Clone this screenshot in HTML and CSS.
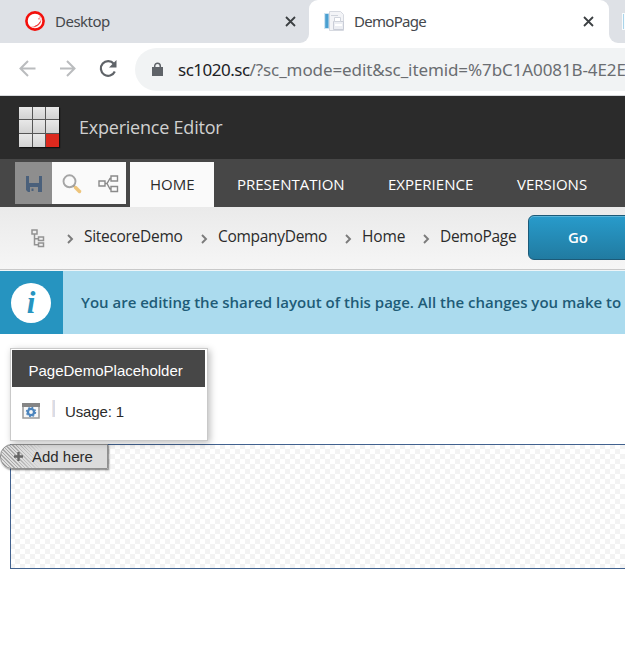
FILE: index.html
```html
<!DOCTYPE html>
<html lang="en">
<head>
<meta charset="utf-8">
<title>DemoPage</title>
<link rel="stylesheet" href="styles.css">
</head>
<body>
<div class="tabs">
  <div class="tab tab-left">
    <svg class="fav" width="20" height="20" viewBox="0 0 20 20"><circle cx="10" cy="10" r="8.6" fill="#fff" stroke="#f3100c" stroke-width="2.6"/><path d="M16 5.500q2 7-5 10.500-3 1-5-.5 4 .5 6.500-2 3.500-3 3.500-8z" fill="#f79a97"/><path d="M15.500 10.500q-1.500 4-6 5M14 7v1.500M15 5.500v1" fill="none" stroke="#e33" stroke-width="1"/></svg>
    <span class="t-desktop">Desktop</span>
    <svg class="close" width="11" height="11" viewBox="0 0 11 11"><path d="M1 1l9 9M10 1l-9 9" stroke="#3c4043" stroke-width="1.8"/></svg>
  </div>
  <div class="tab tab-active">
    <svg class="fav" width="20" height="20" viewBox="0 0 20 20"><path d="M5.500.5h11l3 3v16h-14z" fill="#f3f4f7" stroke="#d6d9e0"/><path d="M0 2h5v16H0z" fill="#cfe5f3"/><path d="M1.200 3h3.300v14H1.200z" fill="#4a9fd0"/><path d="M7 4.500h7" stroke="#d0d4dc"/><path d="M9.500 10.500h10v8h-10z" fill="#eceef3" stroke="#c9cdd7"/><path d="M10.500 6.500h6v4h-6z" fill="#fff" stroke="#d0d4dc"/><path d="M11 14h7" stroke="#fff" stroke-width="2"/></svg>
    <span class="t-demo">DemoPage</span>
    <svg class="close" width="11" height="11" viewBox="0 0 11 11"><path d="M1 1l9 9M10 1l-9 9" stroke="#3c4043" stroke-width="1.8"/></svg>
  </div>
  <div class="tab tab-next"><i></i></div>
</div>
<div class="toolbar">
  <svg class="nav" width="110" height="20" viewBox="0 0 110 20" fill="none" stroke-width="2"><path d="M17.500 9.500H3M10 2L2.500 9.500 10 17M42 9.500h14.500M49 2l7.500 7.500L49 17" stroke="#babcbe"/><path d="M96.800 12.500a7.300 7.300 0 1 1-1-7.700" stroke="#5f6368" stroke-width="2.200"/><path d="M98.500 1v7.500H91z" fill="#5f6368"/></svg>
  <div class="url">
    <svg width="11" height="15" viewBox="0 0 11 15"><path d="M0 5h11v9H0z" fill="#5f6368"/><path d="M2.700 6V4a2.800 2.800 0 0 1 5.600 0v2" fill="none" stroke="#5f6368" stroke-width="1.500"/></svg>
    <span class="addr"><b>sc1020.sc</b>/?sc_mode=edit&amp;sc_itemid=%7bC1A0081B-4E2E</span>
  </div>
</div>
<header class="header">
  <div class="logo"><i></i><i></i><i></i><i></i><i></i><i></i><i></i><i></i><i class="red"></i></div>
  <span class="brand">Experience Editor</span>
</header>
<nav class="ribbon">
  <div class="quick">
    <span class="save"><svg width="16" height="16" viewBox="0 0 16 16"><path d="M0 0h16v16H2l-2-2z" fill="#4a607b"/><path d="M3 0h10v7H3zM4 11h8v5H4z" fill="#8e8e8e"/><path d="M5.500 12.500h2V15h-2z" fill="#4a607b"/></svg></span>
    <svg class="find" width="20" height="20" viewBox="0 0 20 20"><circle cx="7.500" cy="7.300" r="6" fill="#fafafa" stroke="#a5a5a5" stroke-width="1.900"/><path d="M11.500 11.500l2 2" stroke="#999" stroke-width="2"/><path d="M13.500 13.500l4 4" stroke="#edc47b" stroke-width="3.500" stroke-linecap="round"/></svg>
    <svg class="share" width="21" height="18" viewBox="0 0 21 18" fill="none" stroke="#8a8a8a" stroke-width="1.400"><path d="M1 6h6v5H1zM13 1h6.500v5H13zM13 11.500h6.500v5H13zM7 8.500h2l3-5h1M9 8.500l3 5.500h1"/></svg>
  </div>
  <span class="rtab home"><span>HOME</span></span>
  <span class="rtab pres">PRESENTATION</span>
  <span class="rtab exp">EXPERIENCE</span>
  <span class="rtab ver">VERSIONS</span>
</nav>
<div class="crumbs">
  <svg class="tree" width="14" height="19" viewBox="0 0 14 19" fill="none" stroke="#929292" stroke-width="1.500"><path d="M1 1h5v4H1zM7.500 8h5v3.500h-5zM7.500 14h5v3.500h-5zM3.500 5v10.800h4M3.500 9.700h4"/></svg>
  <svg class="chev" width="7" height="10" viewBox="0 0 7 10"><path d="M1 1l4 4-4 4"/></svg><span class="c1">SitecoreDemo</span>
  <svg class="chev" width="7" height="10" viewBox="0 0 7 10"><path d="M1 1l4 4-4 4"/></svg><span class="c2">CompanyDemo</span>
  <svg class="chev" width="7" height="10" viewBox="0 0 7 10"><path d="M1 1l4 4-4 4"/></svg><span class="c3">Home</span>
  <svg class="chev" width="7" height="10" viewBox="0 0 7 10"><path d="M1 1l4 4-4 4"/></svg><span class="c4">DemoPage</span>
  <button class="go">Go</button>
</div>
<div class="notice">
  <div class="info"><span>i</span></div>
  <p>You are editing the shared layout of this page. All the changes you make to</p>
</div>
<main class="canvas">
  <section class="popup">
    <h2><span>PageDemoPlaceholder</span></h2>
    <div class="usage">
      <svg width="18" height="16" viewBox="0 0 18 16"><path d="M1 1h16v14H1z" fill="#f8f8f8" stroke="#9b9b9b" stroke-width="1.500"/><path d="M0 0h18v4H0z" fill="#858585"/><circle cx="9" cy="9" r="3.100" fill="none" stroke="#4b84bd" stroke-width="2.400"/><circle cx="9" cy="9" r="4.600" fill="none" stroke="#4b84bd" stroke-width="1.200" stroke-dasharray="1.800 1.810"/></svg>
      <i></i><span>Usage: 1</span>
    </div>
  </section>
  <section class="placeholder">
    <div class="add"><svg width="11" height="11" viewBox="0 0 11 11"><path d="M5.500 1v9M1 5.500h9" stroke="#666" stroke-width="2.400"/></svg><span>Add here</span></div>
  </section>
</main>
</body>
</html>
```
FILE: styles.css
```css
* { box-sizing: border-box; }
body { margin: 0; width: 625px; height: 653px; overflow: hidden; background: #fff; font-family: "Open Sans", sans-serif; color: #2b2b2b; white-space: nowrap; }
svg { display: block; flex: none; }
span { flex: none; }
.tabs { display: flex; height: 43px; background: linear-gradient(#dee1e6, #dee1e6) 300px 0 / 325px 15px no-repeat #fff; font: 15px "Noto Sans", sans-serif; color: #45484c; }
.tab { display: flex; align-items: center; flex: none; height: 43px; padding-bottom: 1px; }
.tab-left { width: 309px; padding-left: 25px; padding-right: 13px; background: #dee1e6; border-radius: 0 0 9px 0; }
.tab-active { width: 300px; padding-left: 15px; padding-right: 15px; background: #fff; border-radius: 9px 9px 0 0; }
.tab-next { width: 16px; background: #dee1e6; border-radius: 0 0 0 9px; }
.tab-next i { width: 3px; height: 17px; margin-left: 13px; border: 1px solid #f8fbfd; background: #a9d4ea; }
.tab .close { margin-left: auto; }
.t-desktop { margin: -1px 0 0 10px; letter-spacing: -.5px; }
.t-demo { margin: -1px 0 0 10px; letter-spacing: -.72px; }
.toolbar { display: flex; align-items: center; height: 53px; border-bottom: 1px solid #d8dadd; }
.nav { margin: 0 7px 0 18px; }
.url { display: flex; align-items: center; flex: none; width: 490px; height: 43px; padding-left: 17px; border-radius: 22px 0 0 22px; background: #f1f3f4; overflow: hidden; }
.addr { margin-left: 15px; font: 17px "Noto Sans", sans-serif; letter-spacing: -.1px; color: #6a6d71; }
.addr b { font-weight: 400; letter-spacing: -.5px; color: #202124; }
.header { display: flex; align-items: center; height: 63px; padding-left: 19px; background: #2b2b2b; }
.logo { display: grid; grid-template-columns: 13px 12px 13px; grid-template-rows: 12px 13px 13px; gap: 1px; width: 40px; height: 40px; background: #555; box-shadow: 1px 1px 1px #111; margin-top: -1px; }
.logo i { background: linear-gradient(#e8e8e8, #d2d2d2); }
.logo .red { background: #dc291e; }
.brand { margin: -1px 0 0 20px; font-size: 18px; letter-spacing: -.22px; color: #d0d0d0; }
.ribbon { display: flex; height: 48px; background: #474747; color: #fff; font-size: 15px; padding: 3px 0 0 15px; }
.quick { display: flex; align-items: center; width: 111px; height: 42px; background: #fafafa; }
.save { display: flex; align-items: center; justify-content: center; width: 37px; height: 42px; background: #8e8e8e; padding-top: 2px; }
.find { margin: 2px 0 0 10px; }
.share { margin: 2px 0 0 16px; }
.rtab { height: 45px; line-height: 45px; }
.home { width: 84px; margin-left: 4px; padding-left: 20px; background: #fafafa; color: #2b2b2b; }
.pres { width: 108px; margin-left: 23px; }
.exp { width: 86px; margin-left: 43px; }
.ver { margin-left: 43px; }
.crumbs { display: flex; align-items: center; height: 63px; border-bottom: 1px solid #c9c9c9; background: linear-gradient(#eaeaea, #f6f6f6); font-size: 15.500px; letter-spacing: -.3px; }
.crumbs > span { line-height: 62px; margin-top: -4px; }
.tree { margin-left: 31px; }
.chev { fill: none; stroke: #7b7b7b; stroke-width: 1.900; margin-top: 2px; }
.tree + .chev { margin-left: 22px; }
.c1 { width: 117px; margin-left: 10px; }
.c2 { width: 127px; margin-left: 10px; }
.c3 { width: 61px; margin-left: 10px; letter-spacing: -.1px; }
.c4 { width: 88px; margin-left: 10px; }
.go { flex: none; width: 110px; height: 45px; margin-top: -2px; padding: 0 10px 0 0; border: 1px solid #1c5a78; border-radius: 6px; background: linear-gradient(#289bcb, #217ba1); box-shadow: inset 0 1px #5bb4d8; color: #fff; font: 600 15px "Open Sans", sans-serif; }
.notice { display: flex; height: 64px; border-top: 1px solid #eef5f8; background: #abdbee; }
.info { display: flex; align-items: center; justify-content: center; width: 63px; height: 63px; padding-right: 1px; background: #2694c0; }
.info span { width: 40px; height: 40px; margin-top: 1px; border-radius: 50%; background: #fff; color: #2694c0; font: italic bold 31px/40px "Liberation Serif", serif; text-align: center; }
.notice p { margin: 0 0 0 18px; font-weight: 600; font-size: 15px; line-height: 63px; color: #205b77; }
.canvas { padding-top: 14px; font-family: "Liberation Sans", sans-serif; }
.popup { position: relative; z-index: 1; width: 198px; height: 93px; margin-left: 10px; padding: 1px; border: 1px solid #c9c9c9; background: #fff; box-shadow: 2px 2px 7px #0004; }
.popup h2 { margin: 0; width: 193px; height: 37px; padding-left: 16.500px; background: #474747; color: #fff; font-size: 15px; font-weight: 400; line-height: 41px; }
.usage { display: flex; align-items: center; height: 48px; padding-left: 10px; font-size: 15px; letter-spacing: -.12px; }
.usage i { width: 3px; height: 17px; margin: -6px 10px 0 12px; background: linear-gradient(90deg, #f2e7e3 1px, #d9dce8 1px); }
.placeholder { width: 640px; height: 125px; margin: 3px 0 0 10px; border: 1px solid #42628f; background: conic-gradient(#f3f3f3 25%, #fff 0 50%, #f3f3f3 0 75%, #fff 0) -6px -1px / 10px 10px; }
.add { display: flex; align-items: center; width: 108px; height: 25px; margin: -1px 0 0 -11px; padding-left: 12px; border: 1px solid #909090; border-radius: 12px 0 0 12px; background: linear-gradient(90deg, transparent 12px, #dcdcdc 42px), repeating-linear-gradient(45deg, #dedede 0 1.500px, #aaa 1.500px 2.500px); box-shadow: 1px 1px 2px #0008; font-size: 15px; }
.add span { margin-left: 8px; }
```
